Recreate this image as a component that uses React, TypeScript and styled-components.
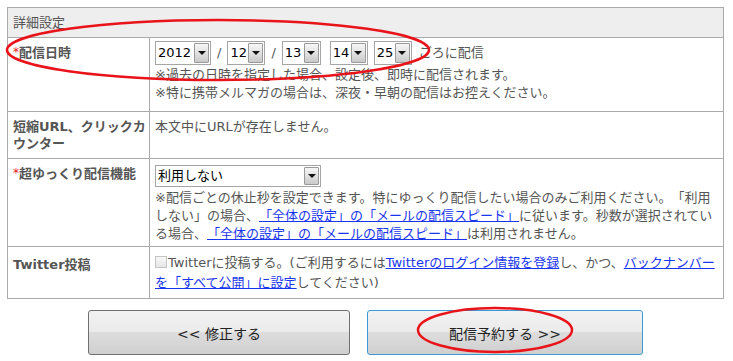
import styled, { createGlobalStyle } from "styled-components";

const GlobalStyle = createGlobalStyle`
  html, body {
    margin: 0;
    padding: 0;
    background: #fff;
  }
  body {
    font-family: "DejaVu Sans", "Noto Sans CJK JP", sans-serif;
    font-size: 13px;
    color: #555;
    text-spacing-trim: space-all;
  }
`;

const Page = styled.div`
  position: relative;
  width: 733px;
  height: 361px;
  padding: 7px;
  box-sizing: border-box;
  overflow: hidden;
`;

const Table = styled.table`
  width: 717px;
  border-collapse: collapse;
  table-layout: fixed;
  border: 1px solid #aaa;
`;

const LabelCol = styled.col`
  width: 142px;
`;

const Row = styled.tr<{ $h: number }>`
  height: ${(p) => p.$h}px;
`;

const HeadCell = styled.th`
  background: #eee;
  border: 1px solid #aaa;
  text-align: left;
  font-weight: normal;
  color: #555;
  line-height: 18px;
  padding: 5px 5px;
`;

const LabelCell = styled.th<{ $pt?: number }>`
  border: 1px solid #aaa;
  text-align: left;
  vertical-align: top;
  font-weight: bold;
  color: #555;
  line-height: 17px;
  padding: ${(p) => p.$pt ?? 6}px 1px 6px 5px;
`;

const Required = styled.span`
  color: #e61919;
  font-weight: normal;
  font-size: 12px;
  vertical-align: 1px;
`;

const ValueCell = styled.td<{ $pt?: number; $lh?: number }>`
  border: 1px solid #aaa;
  vertical-align: top;
  line-height: ${(p) => p.$lh ?? 18}px;
  padding: ${(p) => p.$pt ?? 6}px 5px 3px 5px;
`;

const DateLine = styled.div`
  display: flex;
  align-items: center;
  height: 24px;
  margin-bottom: 1px;
`;

const SelectBox = styled.span<{ $w: number; $h: number; $ml?: number }>`
  display: inline-flex;
  box-sizing: border-box;
  width: ${(p) => p.$w}px;
  height: ${(p) => p.$h}px;
  margin-left: ${(p) => p.$ml ?? 0}px;
  border: 1px solid #a6a6a6;
  background: #fff;
  padding: 1px;
`;

const SelectValue = styled.span`
  flex: 1;
  display: flex;
  align-items: center;
  padding-left: 1px;
  color: #000;
  font-size: 13px;
  white-space: nowrap;
`;

const SelectArrow = styled.span`
  width: 15px;
  box-sizing: border-box;
  border: 1px solid #9a9a9a;
  border-radius: 1px;
  background: linear-gradient(#f6f6f6, #e2e2e2 50%, #c9c9c9);
  display: flex;
  align-items: center;
  justify-content: center;

  &::after {
    content: "";
    border-left: 4px solid transparent;
    border-right: 4px solid transparent;
    border-top: 4px solid #111;
  }
`;

const Sep = styled.span`
  margin: 0 6px;
`;

const After = styled.span`
  margin-left: 7px;
`;

const Line = styled.div``;

const SpeedSelect = styled.div`
  margin-bottom: 2px;
  display: flex;
`;

const Link = styled.a`
  color: #1a35ee;
  text-decoration: underline;
  cursor: pointer;
`;

const Check = styled.span`
  display: inline-block;
  box-sizing: border-box;
  width: 12px;
  height: 12px;
  border: 1px solid #c4c4c4;
  background: linear-gradient(#f8f8f8, #e6e6e6);
  vertical-align: -1px;
  margin-right: 1px;
`;

const ButtonRow = styled.div`
  display: flex;
  justify-content: center;
  gap: 17px;
  margin-top: 11px;
  width: 717px;
`;

const Button = styled.button<{ $primary?: boolean; $w: number }>`
  width: ${(p) => p.$w}px;
  height: 45px;
  border: 1px solid ${(p) => (p.$primary ? "#3a9ad6" : "#707070")};
  border-radius: 3px;
  background: linear-gradient(#f2f2f2, #ebebeb 48%, #dddddd 50%, #cfcfcf);
  font-family: "DejaVu Sans", "Noto Sans CJK JP", sans-serif;
  font-size: 14px;
  color: #222;
  padding: 0;
  cursor: pointer;
`;

const Marks = styled.svg`
  position: absolute;
  left: 0;
  top: 0;
  pointer-events: none;
`;

function Select({ value, w, h = 24, ml }: { value: string; w: number; h?: number; ml?: number }) {
  return (
    <SelectBox $w={w} $h={h} $ml={ml}>
      <SelectValue>{value}</SelectValue>
      <SelectArrow />
    </SelectBox>
  );
}

export default function App() {
  return (
    <Page>
      <GlobalStyle />
      <Table>
        <colgroup>
          <LabelCol />
          <col />
        </colgroup>
        <thead>
          <Row $h={30}>
            <HeadCell colSpan={2}>詳細設定</HeadCell>
          </Row>
        </thead>
        <tbody>
          <Row $h={74}>
            <LabelCell>
              <Required>*</Required>配信日時
            </LabelCell>
            <ValueCell $pt={3}>
              <DateLine>
                <Select value="2012" w={56} />
                <Sep>/</Sep>
                <Select value="12" w={38} />
                <Sep>/</Sep>
                <Select value="13" w={39} />
                <Select value="14" w={38} ml={9} />
                <Select value="25" w={38} ml={6} />
                <After>ごろに配信</After>
              </DateLine>
              <Line>※過去の日時を指定した場合、設定後、即時に配信されます。</Line>
              <Line>※特に携帯メルマガの場合は、深夜・早朝の配信はお控えください。</Line>
            </ValueCell>
          </Row>
          <Row $h={47}>
            <LabelCell>短縮URL、クリックカウンター</LabelCell>
            <ValueCell>本文中にURLが存在しません。</ValueCell>
          </Row>
          <Row $h={88}>
            <LabelCell>
              <Required>*</Required>超ゆっくり配信機能
            </LabelCell>
            <ValueCell>
              <SpeedSelect>
                <Select value="利用しない" w={166} h={22} />
              </SpeedSelect>
              ※配信ごとの休止秒を設定できます。特にゆっくり配信したい場合のみご利用ください。「利用しない」の場合、
              <Link>「全体の設定」の「メールの配信スピード」</Link>
              に従います。秒数が選択されている場合、
              <Link>「全体の設定」の「メールの配信スピード」</Link>
              は利用されません。
            </ValueCell>
          </Row>
          <Row $h={52}>
            <LabelCell $pt={9}>Twitter投稿</LabelCell>
            <ValueCell $lh={20}>
              <Check />
              Twitterに投稿する。(ご利用するには
              <Link>Twitterのログイン情報を登録</Link>
              し、かつ、
              <Link>バックナンバーを「すべて公開」に設定</Link>
              してください)
            </ValueCell>
          </Row>
        </tbody>
      </Table>
      <ButtonRow>
        <Button $w={262}>&lt;&lt; 修正する</Button>
        <Button $w={276} $primary>
          配信予約する &gt;&gt;
        </Button>
      </ButtonRow>
      <Marks width={733} height={361} viewBox="0 0 733 361">
        <ellipse cx={218} cy={50} rx={211} ry={30} fill="none" stroke="#e8141a" strokeWidth={2.5} />
        <ellipse cx={495} cy={330} rx={77} ry={22} fill="none" stroke="#e8141a" strokeWidth={2.5} />
      </Marks>
    </Page>
  );
}
